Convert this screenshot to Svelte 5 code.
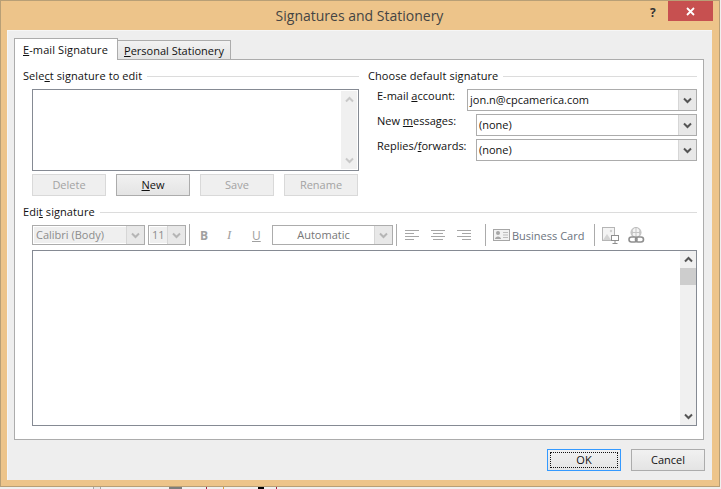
<script>
	const lists = [
		{ before: "E-mail ", key: "a", after: "ccount:", value: "jon.n@cpcamerica.com", wide: true },
		{ before: "New ", key: "m", after: "essages:", value: "(none)", wide: false },
		{ before: "Replies/", key: "f", after: "orwards:", value: "(none)", wide: false }
	];

	const sigButtons = [
		{ label: "Delete", off: true },
		{ label: "New", off: false },
		{ label: "Save", off: true },
		{ label: "Rename", off: true }
	];

	// bits of whatever window sits behind the dialog, showing under its bottom edge
	const behind = [
		{ x: 93, w: 1, color: "#a8a8a8" },
		{ x: 94, w: 6, color: "#e6e6e6" },
		{ x: 100, w: 1, color: "#a8a8a8" },
		{ x: 169, w: 13, color: "#7d7d7d" },
		{ x: 206, w: 1, color: "#a0204a" },
		{ x: 223, w: 1, color: "#d9a040" },
		{ x: 258, w: 6, color: "#000" },
		{ x: 276, w: 1, color: "#a0204a" }
	];
</script>

{#snippet chevron()}
	<svg class="chev" width="9" height="7" viewBox="0 0 9 7">
		<path d="M1 1.5 L4.5 5 L8 1.5" fill="none" stroke="currentColor" stroke-width="2" />
	</svg>
{/snippet}

{#snippet chevronUp()}
	<svg class="chev" width="9" height="7" viewBox="0 0 9 7">
		<path d="M1 5.5 L4.5 2 L8 5.5" fill="none" stroke="currentColor" stroke-width="2" />
	</svg>
{/snippet}

<div class="window">
	<header class="titlebar">
		<span class="title">Signatures and Stationery</span>
		<span class="help">?</span>
		<span class="close">
			<svg width="9" height="9" viewBox="0 0 9 9">
				<path d="M1 1 L8 8 M8 1 L1 8" stroke="#fff" stroke-width="1.8" />
			</svg>
		</span>
	</header>

	<div class="client">
		<div class="tabs">
			<div class="tab active"><u>E</u>-mail Signature</div>
			<div class="tab"><u>P</u>ersonal Stationery</div>
		</div>

		<div class="panel">
			<div class="top">
				<section class="left">
					<div class="group-label"><span>Sele<u>c</u>t signature to edit</span></div>
					<div class="listbox">
						<div class="scroll">
							<span class="arrow off">{@render chevronUp()}</span>
							<span class="arrow off">{@render chevron()}</span>
						</div>
					</div>
					<div class="sig-buttons">
						{#each sigButtons as b}
							<button class="btn" class:off={b.off}>
								{#if b.label == "New"}<u>N</u>ew{:else}{b.label}{/if}
							</button>
						{/each}
					</div>
				</section>

				<section class="right">
					<div class="group-label"><span>Choose default signature</span></div>
					<div class="defaults">
						{#each lists as l}
							<div class="default-row">
								<span class="default-label">{l.before}<u>{l.key}</u>{l.after}</span>
								<div class="combo" class:wide={l.wide}>
									<span class="combo-value">{l.value}</span>
									<span class="drop">{@render chevron()}</span>
								</div>
							</div>
						{/each}
					</div>
				</section>
			</div>

			<div class="group-label edit-label"><span>Edi<u>t</u> signature</span></div>

			<div class="toolbar">
				<div class="combo tool font-combo">
					<span class="combo-value">Calibri (Body)</span>
					<span class="drop">{@render chevron()}</span>
				</div>
				<div class="combo tool size-combo">
					<span class="combo-value">11</span>
					<span class="drop">{@render chevron()}</span>
				</div>
				<span class="sep first"></span>
				<span class="fmt b">B</span>
				<span class="fmt i">I</span>
				<span class="fmt u">U</span>
				<div class="combo tool color-combo">
					<span class="combo-value">Automatic</span>
					<span class="drop">{@render chevron()}</span>
				</div>
				<span class="sep align-sep"></span>
				<div class="aligns">
					<svg width="14" height="11" viewBox="0 0 14 11">
						<path d="M0 .5H14M0 3.5H9M0 6.5H14M0 9.5H9" stroke="#a6a6a6" />
					</svg>
					<svg width="14" height="11" viewBox="0 0 14 11">
						<path d="M0 .5H14M2 3.5H12M0 6.5H14M2 9.5H12" stroke="#a6a6a6" />
					</svg>
					<svg width="14" height="11" viewBox="0 0 14 11">
						<path d="M0 .5H14M5 3.5H14M0 6.5H14M5 9.5H14" stroke="#a6a6a6" />
					</svg>
				</div>
				<span class="sep card-sep"></span>
				<svg class="card-icon" width="17" height="13" viewBox="0 0 17 13">
					<rect x=".5" y=".5" width="16" height="11" fill="#f2f2f2" stroke="#a6a6a6" />
					<circle cx="5" cy="4" r="2" fill="#a6a6a6" />
					<path d="M2 10 C2 6.5 8 6.5 8 10Z" fill="#a6a6a6" />
					<path d="M10 3.5H15M10 6H15M10 8.5H15" stroke="#bdbdbd" />
				</svg>
				<span class="card-text">Business Card</span>
				<span class="sep"></span>
				<svg class="pic-icon" width="17" height="17" viewBox="0 0 17 17">
					<rect x=".5" y=".5" width="12" height="13" fill="#f4f4f4" stroke="#b5b5b5" />
					<path d="M1 13 L5 7 L9 13Z" fill="#d4d4d4" />
					<circle cx="9" cy="4" r="1.2" fill="#cfcfcf" />
					<rect x="9.5" y="8.5" width="7" height="5" fill="#fff" stroke="#8f8f8f" />
					<path d="M13 14V16M10.5 16.5H15.5" stroke="#8f8f8f" />
				</svg>
				<svg class="link-icon" width="17" height="17" viewBox="0 0 17 17">
					<circle cx="8" cy="5.5" r="5" fill="#f4f4f4" stroke="#b5b5b5" />
					<path d="M3 5.5H13M8 .5V10M5 1.5C4 4 4 7 5 9.5M11 1.5C12 4 12 7 11 9.5" fill="none" stroke="#c4c4c4" />
					<rect x="1" y="10" width="8" height="5" rx="2.5" fill="#fff" stroke="#8f8f8f" stroke-width="1.6" />
					<rect x="7.5" y="10" width="8" height="5" rx="2.5" fill="none" stroke="#8f8f8f" stroke-width="1.6" />
				</svg>
			</div>

			<div class="editor">
				<div class="scroll">
					<span class="arrow">{@render chevronUp()}</span>
					<span class="thumb"></span>
					<span class="track"></span>
					<span class="arrow">{@render chevron()}</span>
				</div>
			</div>
		</div>

		<footer class="footer">
			<button class="btn default"><span class="focus">OK</span></button>
			<button class="btn">Cancel</button>
		</footer>
	</div>
</div>

<div class="behind">
	{#each behind as b}
		<span class="bit" style="left: {b.x}px; width: {b.w}px; background: {b.color}"></span>
	{/each}
</div>

<style>
	:global(body) {
		background: #f0f0f0;
	}

	.window {
		box-sizing: border-box;
		width: 720px;
		height: 487px;
		background: #edc48a;
		border: 1px solid #b89f76;
		display: flex;
		flex-direction: column;
		font-family: "Open Sans", "Noto Sans", sans-serif;
		font-size: 11px;
		color: #111;
	}

	.behind {
		position: relative;
		height: 2px;
	}

	.bit {
		position: absolute;
		top: 0;
		height: 2px;
	}

	u {
		text-underline-offset: 1px;
	}

	.titlebar {
		position: relative;
		height: 29px;
		flex: none;
		display: flex;
		justify-content: center;
		align-items: center;
	}

	.title {
		font-size: 14px;
		color: #444;
		margin-left: -1px;
	}

	.help {
		position: absolute;
		left: 649px;
		top: 3px;
		font-size: 12px;
		font-weight: bold;
		color: #333;
	}

	.close {
		position: absolute;
		left: 667px;
		top: 0;
		width: 45px;
		height: 20px;
		background: #c75050;
		display: flex;
		align-items: center;
		justify-content: center;
	}

	.client {
		flex: 1;
		margin: 0 7px 6px 6px;
		background: #eeeeee;
		box-shadow: inset 1px 1px 0 #f6f6f6;
		padding: 8px 8px 0 7px;
		display: flex;
		flex-direction: column;
	}

	.tabs {
		display: flex;
		align-items: flex-end;
		height: 22px;
		flex: none;
		position: relative;
		z-index: 1;
		margin-bottom: -1px;
	}

	.tab {
		box-sizing: border-box;
		height: 20px;
		width: 113px;
		padding-left: 6px;
		line-height: 20px;
		background: linear-gradient(#f2f2f2, #e4e4e4);
		border: 1px solid #acacac;
		border-left: none;
	}

	.tab.active {
		width: 104px;
		height: 22px;
		padding-left: 8px;
		line-height: 21px;
		background: #fff;
		border-left: 1px solid #acacac;
		border-bottom: none;
		letter-spacing: .1px;
	}

	.panel {
		box-sizing: border-box;
		height: 381px;
		background: #fff;
		border: 1px solid #acacac;
		padding: 8px 6px 0 8px;
		flex: none;
	}

	.top {
		display: flex;
		gap: 9px;
	}

	.left {
		width: 336px;
		flex: none;
	}

	.right {
		flex: 1;
	}

	.group-label {
		display: flex;
		align-items: center;
		gap: 5px;
		height: 16px;
		white-space: pre;
		letter-spacing: .08px;
	}

	.group-label span {
		margin-top: -2px;
	}

	.group-label::after {
		content: "";
		flex: 1;
		height: 1px;
		background: #dcdcdc;
	}

	.listbox {
		box-sizing: border-box;
		margin: 5px 0 0 9px;
		height: 82px;
		border: 1px solid #858a93;
		display: flex;
		justify-content: flex-end;
		padding: 1px;
	}

	.scroll {
		width: 16px;
		background: #f0f0f0;
		display: flex;
		flex-direction: column;
		justify-content: space-between;
	}

	.arrow {
		height: 17px;
		display: flex;
		align-items: center;
		justify-content: center;
		color: #555;
	}

	.arrow.off {
		color: #c8c8c8;
	}

	.thumb {
		height: 17px;
		background: #cdcdcd;
		flex: none;
	}

	.track {
		flex: 1;
	}

	.chev {
		display: block;
	}

	.sig-buttons {
		display: flex;
		gap: 10px;
		margin: 3px 0 0 9px;
	}

	.btn {
		box-sizing: border-box;
		width: 74px;
		height: 22px;
		padding: 0 0 2px;
		font: inherit;
		color: #111;
		background: linear-gradient(#f1f1f1, #e4e4e4);
		border: 1px solid #acacac;
	}

	.btn.off {
		color: #a3a3a3;
		background: #efefef;
		border-color: #d9d9d9;
	}

	.btn.default {
		border-color: #3399ff;
		padding: 2px;
		margin-right: 10px;
	}

	.focus {
		display: block;
		height: 100%;
		box-sizing: border-box;
		border: 1px dotted #111;
		line-height: 14px;
	}

	.defaults {
		margin: 5px 0 0 9px;
		display: flex;
		flex-direction: column;
		gap: 3px;
	}

	.default-row {
		display: flex;
		justify-content: space-between;
	}

	.default-label {
		line-height: 14px;
	}

	.combo {
		box-sizing: border-box;
		width: 221px;
		height: 22px;
		border: 1px solid #acacac;
		background: #fff;
		display: flex;
		justify-content: space-between;
		align-items: stretch;
	}

	.combo.wide {
		width: 230px;
	}

	.combo-value {
		padding-left: 2px;
		line-height: 20px;
	}

	.drop {
		width: 17px;
		background: #e8e8e8;
		border-left: 1px solid #d6d6d6;
		display: flex;
		align-items: center;
		justify-content: center;
		color: #555;
	}

	.edit-label {
		margin-top: 8px;
	}

	.toolbar {
		margin: 5px 0 0 9px;
		height: 20px;
		display: flex;
		align-items: center;
	}

	.combo.tool {
		height: 20px;
		color: #8c8c8c;
	}

	.combo.tool .combo-value {
		line-height: 18px;
		padding-left: 3px;
	}

	.combo.tool .drop {
		color: #b5b5b5;
	}

	.font-combo {
		width: 113px;
		background: #efefef;
		box-shadow: inset 0 0 0 1px #fff;
		margin-right: 3px;
	}

	.size-combo {
		width: 38px;
		background: #efefef;
		box-shadow: inset 0 0 0 1px #fff;
	}

	.color-combo {
		width: 121px;
	}

	.combo.color-combo .combo-value {
		flex: 1;
		text-align: center;
		padding: 0;
		color: #777;
	}

	.sep {
		width: 1px;
		height: 22px;
		background: #ababab;
		flex: none;
		margin: 0 7px 0 3px;
	}

	.sep.first,
	.sep.align-sep {
		margin: 0 8px 0 3px;
	}

	.sep.card-sep {
		margin: 0 7px 0 14px;
	}

	.fmt {
		width: 25px;
		flex: none;
		padding-left: 2px;
		box-sizing: border-box;
		font-size: 12px;
		color: #a0a0a0;
	}

	.fmt.b {
		font-weight: bold;
	}

	.fmt.i {
		font-style: italic;
		font-family: "Liberation Serif", serif;
		font-size: 13px;
		width: 27px;
		padding-left: 4px;
	}

	.fmt.u {
		text-decoration: underline;
		width: 22px;
	}

	.aligns {
		display: flex;
		gap: 12px;
	}

	.card-icon {
		margin-right: 2px;
		flex: none;
	}

	.card-text {
		width: 72px;
		flex: none;
		color: #6c7480;
		margin-right: 7px;
		white-space: nowrap;
	}

	.pic-icon {
		margin-right: 9px;
		flex: none;
	}

	.link-icon {
		flex: none;
	}

	.editor {
		box-sizing: border-box;
		margin: 5px 0 0 9px;
		height: 176px;
		border: 1px solid #858a93;
		display: flex;
		justify-content: flex-end;
	}

	.footer {
		display: flex;
		justify-content: flex-end;
		margin-top: 9px;
		margin-right: -1px;
	}
</style>
